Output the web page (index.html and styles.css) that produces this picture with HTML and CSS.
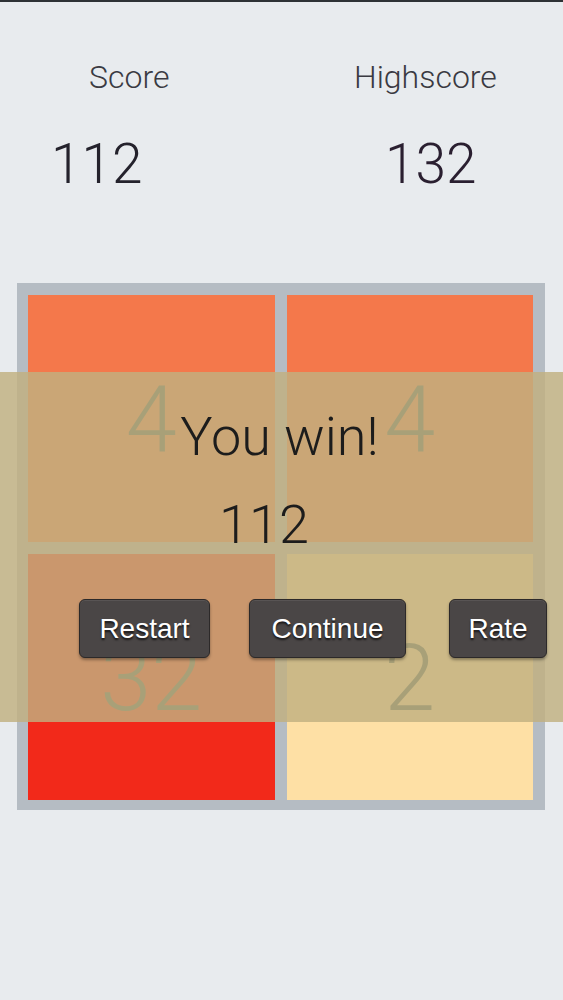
FILE: index.html
```html
<!DOCTYPE html>
<html>
<head>
<meta charset="utf-8">
<link rel="stylesheet" href="styles.css">
</head>
<body>
<div class="app">
  <div class="scores">
    <div class="col col-score">
      <div class="label">Score</div>
      <div class="value">112</div>
    </div>
    <div class="col col-high">
      <div class="label">Highscore</div>
      <div class="value">132</div>
    </div>
  </div>
  <div class="board">
    <div class="tile t-orange"><span>4</span></div>
    <div class="tile t-orange"><span>4</span></div>
    <div class="tile t-red"><span>32</span></div>
    <div class="tile t-yellow"><span>2</span></div>
  </div>
  <div class="overlay">
    <div class="win">You win!</div>
    <div class="final">112</div>
    <div class="buttons">
      <button class="btn btn-restart">Restart</button>
      <button class="btn btn-continue">Continue</button>
      <button class="btn btn-rate">Rate</button>
    </div>
  </div>
</div>
</body>
</html>
```
FILE: styles.css
```css
html, body {
  margin: 0;
  padding: 0;
  background: #e8ebee;
}
.app {
  position: relative;
  width: 563px;
  height: 1000px;
  border-top: 2px solid #2e3235;
  box-sizing: border-box;
  font-family: Roboto, "Liberation Sans", sans-serif;
  font-weight: 300;
  overflow: hidden;
}
.scores {
  display: grid;
  grid-template-columns: 281px 282px;
  padding-top: 55px;
}
.col {
  display: flex;
  flex-direction: column;
  gap: 37px;
}
.label {
  font-size: 32px;
  line-height: 40px;
  color: #3a3a42;
}
.value {
  font-size: 55px;
  line-height: 60px;
  color: #24222c;
}
.col-score .label { padding-left: 89px; }
.col-score .value { padding-left: 51px; }
.col-high .label { padding-left: 73px; }
.col-high .value { padding-left: 104px; color: #2a1f30; }
.board {
  margin: 89px 0 0 17px;
  width: 528px;
  height: 527px;
  box-sizing: border-box;
  padding: 12px 12px 10px 11px;
  background: #b5bcc3;
  display: grid;
  grid-template-columns: 1fr 1fr;
  grid-template-rows: 1fr 1fr;
  gap: 12px;
}
.tile {
  display: flex;
  align-items: center;
  justify-content: center;
  font-size: 92px;
  color: rgb(58, 92, 86);
  padding-top: 4px;
  box-sizing: border-box;
}
.t-orange { background: #f4784b; }
.t-red { background: #f2291a; }
.t-yellow { background: #fee0a5; }
.overlay {
  position: absolute;
  left: 0;
  right: 0;
  top: 370px;
  height: 350px;
  background: rgba(193, 176, 128, 0.82);
  display: flex;
  flex-direction: column;
}
.win {
  font-size: 54px;
  line-height: 60px;
  color: #1c1c1c;
  text-align: center;
  padding-top: 35px;
  padding-right: 4px;
}
.final {
  font-size: 54px;
  line-height: 60px;
  color: #1c1c1c;
  padding-left: 219px;
  margin-top: 28px;
}
.buttons {
  display: flex;
  padding-left: 79px;
  margin-top: 44px;
}
.btn {
  height: 59px;
  box-sizing: border-box;
  background: #4a4646;
  border: 1px solid #2c2929;
  border-radius: 6px;
  box-shadow: 0 2px 3px rgba(0, 0, 0, 0.35), inset 0 1px 0 rgba(255, 255, 255, 0.08);
  color: #ffffff;
  font-family: "Liberation Sans", Arial, sans-serif;
  font-size: 28px;
  text-shadow: 0 2px 2px rgba(0, 0, 0, 0.7);
  padding: 0;
}
.btn-restart { width: 131px; }
.btn-continue { width: 157px; margin-left: 39px; }
.btn-rate { width: 98px; margin-left: 43px; }
```
